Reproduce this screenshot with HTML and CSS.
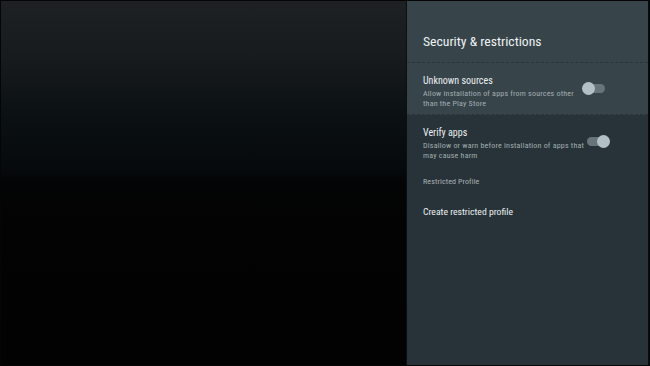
FILE: index.html
```html
<!DOCTYPE html>
<html>
<head>
<meta charset="utf-8">
<link rel="stylesheet" href="styles.css">
</head>
<body>
<div class="screen">
  <div class="backdrop"></div>
  <div class="panel">
    <div class="header">
      <div class="title">Security &amp; restrictions</div>
    </div>
    <div class="row focused">
      <div class="text">
        <div class="label">Unknown sources</div>
        <div class="desc">Allow installation of apps from sources other than the Play Store</div>
      </div>
      <div class="toggle off"><span class="track"></span><span class="thumb"></span></div>
    </div>
    <div class="row">
      <div class="text">
        <div class="label">Verify apps</div>
        <div class="desc">Disallow or warn before installation of apps that may cause harm</div>
      </div>
      <div class="toggle on"><span class="track"></span><span class="thumb"></span></div>
    </div>
    <div class="section">Restricted Profile</div>
    <div class="action">Create restricted profile</div>
  </div>
</div>
</body>
</html>
```

FILE: styles.css
```css
html, body {
  margin: 0;
  padding: 0;
  background: #000;
}
.screen {
  width: 650px;
  height: 366px;
  box-sizing: border-box;
  border: 1px solid #050505;
  display: flex;
  font-family: "Roboto Condensed", "Liberation Sans Narrow", Roboto, sans-serif;
  overflow: hidden;
}
.backdrop {
  flex: 1;
  background: linear-gradient(180deg, #1d2124 0px, #171b1e 55px, #0c1114 110px, #05090b 172px, #040506 177px, #030303 220px, #020202 366px);
  border-right: 1px solid #0c0f11;
}
.panel {
  width: 241px;
  background: #273338;
  display: flex;
  flex-direction: column;
  border-right: 1px solid #0a0c0d;
}
.header {
  height: 62px;
  box-sizing: border-box;
  padding: 32px 0 0 16px;
  background: #37454b;
  border-bottom: 1px dashed #2b3539;
}
.title {
  font-size: 13.7px;
  line-height: 16px;
  color: #eef1f2;
}
.row {
  height: 52px;
  box-sizing: border-box;
  padding: 0 38px 0 16px;
  display: flex;
  align-items: center;
}
.row.focused {
  background: #37454b;
  border-bottom: 1px dashed #2b3539;
}
.text {
  flex: 1;
  align-self: flex-start;
  padding-top: 12px;
}
.label {
  font-size: 10px;
  line-height: 12px;
  color: #eceff1;
}
.desc {
  margin-top: 2px;
  font-size: 8px;
  line-height: 9.5px;
  letter-spacing: 0.2px;
  color: #a3acb0;
}
.toggle {
  position: relative;
  width: 28px;
  height: 13px;
  flex: none;
  margin-left: -4px;
}
.track {
  position: absolute;
  left: 5px;
  top: 2px;
  width: 18px;
  height: 9px;
  border-radius: 5px;
  background: #67757a;
}
.thumb {
  position: absolute;
  top: 0;
  width: 13px;
  height: 13px;
  border-radius: 50%;
  background: #b3c1c5;
}
.off .thumb { left: 0; }
.on .thumb { right: 0; }
.section {
  padding: 10px 0 0 16px;
  font-size: 8px;
  line-height: 10px;
  letter-spacing: 0.1px;
  color: #a7b0b4;
}
.action {
  padding: 19px 0 0 16px;
  font-size: 9.7px;
  line-height: 12px;
  color: #eceff1;
}
```
